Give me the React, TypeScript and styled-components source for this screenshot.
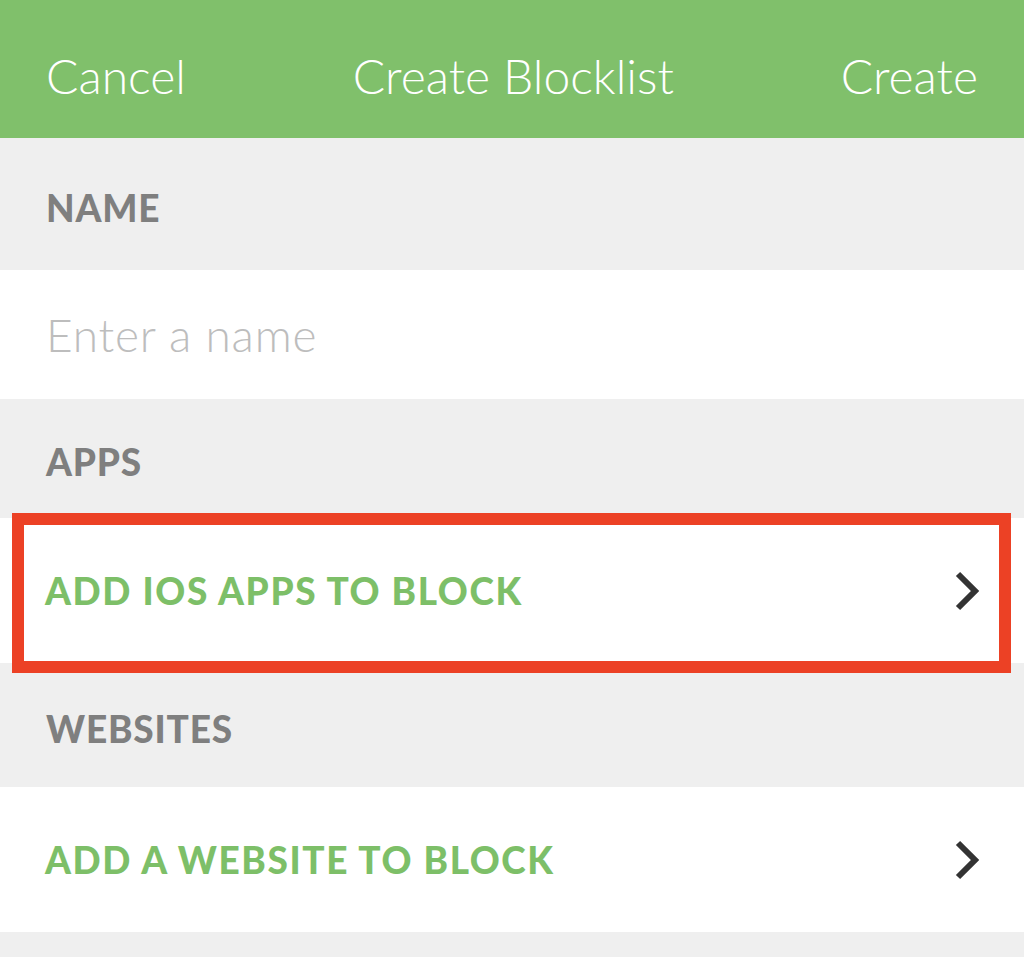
import styled, { createGlobalStyle } from "styled-components";

const GlobalStyle = createGlobalStyle`
  html, body {
    margin: 0;
    padding: 0;
    background: #efefef;
  }
  body {
    font-family: Lato, "Noto Sans", sans-serif;
  }
`;

const Screen = styled.div`
  width: 1024px;
  height: 957px;
  overflow: hidden;
  background: #efefef;
  display: flex;
  flex-direction: column;
`;

const NavBar = styled.header`
  height: 138px;
  background: #80c06b;
  display: flex;
  align-items: center;
  justify-content: space-between;
  padding: 14px 46px 0 46px;
  box-sizing: border-box;
  color: #ffffff;
  font-size: 48px;
  font-weight: 300;
`;

const NavItem = styled.span`
  line-height: 1;
`;

const SectionHeader = styled.div<{ $height: number }>`
  height: ${(p) => p.$height}px;
  display: flex;
  align-items: center;
  padding: 6px 46px 0;
  box-sizing: border-box;
  color: #7f7f7f;
  font-size: 37px;
  font-weight: 900;
  letter-spacing: 0.8px;
`;

const InputRow = styled.div`
  height: 129px;
  background: #ffffff;
  display: flex;
  align-items: center;
  padding: 0 46px;
  box-sizing: border-box;
`;

const NameInput = styled.input`
  border: none;
  outline: none;
  background: transparent;
  width: 100%;
  font-family: inherit;
  font-size: 46px;
  font-weight: 300;
  letter-spacing: 0.8px;
  color: #333;
  padding: 0;
  &::placeholder {
    color: #bdbdbd;
  }
`;

const LinkRow = styled.div`
  position: relative;
  height: 145px;
  background: #ffffff;
  display: flex;
  align-items: center;
  justify-content: space-between;
  padding: 0 44px 0 45px;
  box-sizing: border-box;
`;

const LinkLabel = styled.span`
  color: #7dbf68;
  font-size: 37px;
  font-weight: 900;
  letter-spacing: 1.6px;
`;

const Highlight = styled.div`
  position: absolute;
  left: 12px;
  top: -5px;
  width: 999px;
  height: 160px;
  box-sizing: border-box;
  border: 12px solid #ec4125;
  pointer-events: none;
`;

const Filler = styled.div`
  flex: 1;
`;

function Chevron() {
  return (
    <svg width="26" height="42" viewBox="0 0 26 42" fill="none">
      <path
        d="M4 4 L21 21 L4 38"
        stroke="#333333"
        strokeWidth="6"
        strokeLinecap="butt"
        strokeLinejoin="miter"
      />
    </svg>
  );
}

export default function App() {
  return (
    <>
      <GlobalStyle />
      <Screen>
        <NavBar>
          <NavItem>Cancel</NavItem>
          <NavItem>Create Blocklist</NavItem>
          <NavItem>Create</NavItem>
        </NavBar>
        <SectionHeader $height={132}>NAME</SectionHeader>
        <InputRow>
          <NameInput placeholder="Enter a name" />
        </InputRow>
        <SectionHeader $height={119}>APPS</SectionHeader>
        <LinkRow>
          <LinkLabel>ADD IOS APPS TO BLOCK</LinkLabel>
          <Chevron />
          <Highlight />
        </LinkRow>
        <SectionHeader $height={124}>WEBSITES</SectionHeader>
        <LinkRow>
          <LinkLabel>ADD A WEBSITE TO BLOCK</LinkLabel>
          <Chevron />
        </LinkRow>
        <Filler />
      </Screen>
    </>
  );
}
